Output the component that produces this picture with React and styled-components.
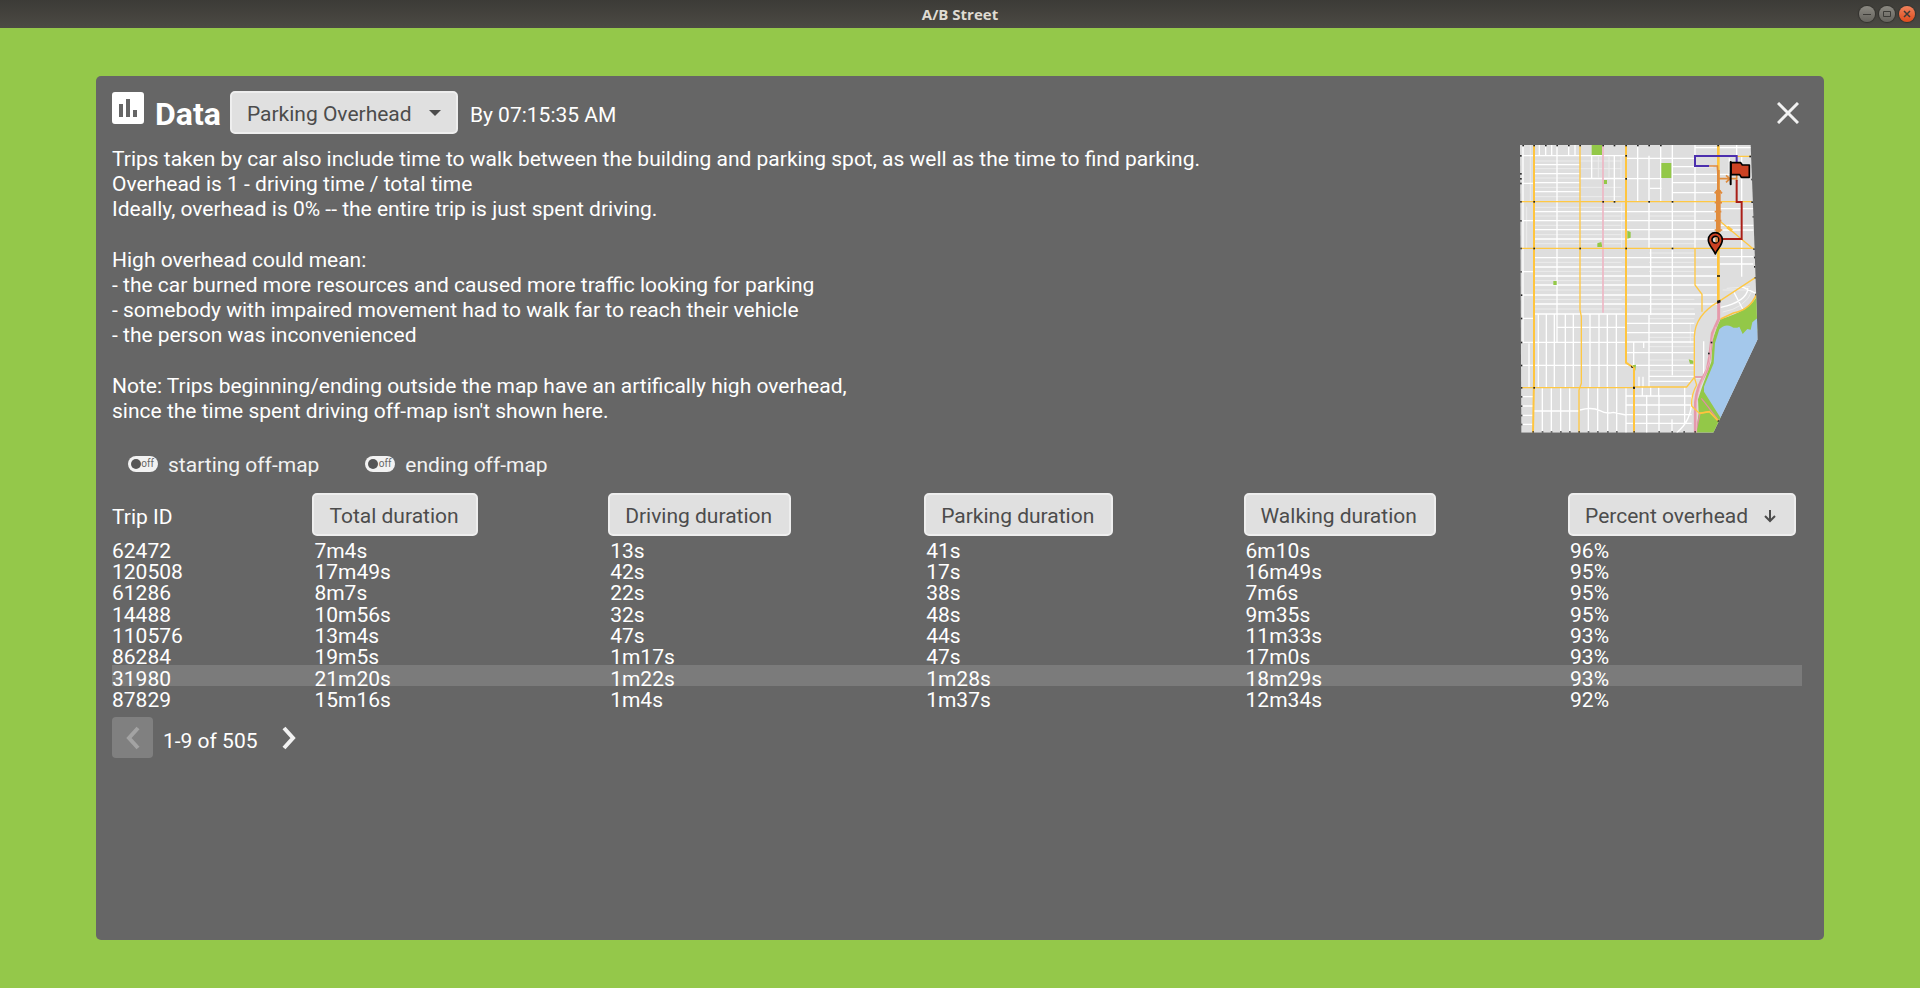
import React, { useState } from "react";
import styled, { createGlobalStyle } from "styled-components";

const GlobalStyle = createGlobalStyle`
  * { box-sizing: border-box; }
  body {
    margin: 0;
    background: #94c84a;
    font-family: Roboto, "Liberation Sans", sans-serif;
    font-size: 21px;
    line-height: 25px;
    color: #fff;
  }
  button, select, input { font: inherit; margin: 0; }
`;

const Page = styled.div`
  display: flex;
  flex-direction: column;
  min-height: 100vh;
`;

const TitleBar = styled.header`
  display: grid;
  grid-template-columns: 1fr auto 1fr;
  align-items: center;
  height: 28px;
  padding: 0 5px;
  background: linear-gradient(#3c3b37, #4c4a44);
`;

const WindowTitle = styled.span`
  grid-column: 2;
  font: bold 15px/20px "Open Sans", "Noto Sans", sans-serif;
  color: #dfdbd2;
`;

const WindowButtons = styled.div`
  display: flex;
  justify-content: flex-end;
  gap: 4px;
`;

const WindowButton = styled.button`
  display: flex;
  width: 16px;
  height: 16px;
  padding: 0;
  border: 0;
  border-radius: 50%;
  color: #3c3b37;
  background: ${(p) => (p.$close ? "linear-gradient(#f0825c, #df4b1c)" : "linear-gradient(#8b8982, #65635d)")};
  box-shadow: 0 0 1px 1px #33322e;
`;

const Main = styled.main`
  display: flex;
  flex: 1;
  padding: 48px 5%;
`;

const Panel = styled.section`
  flex: 1;
  min-width: 0;
  padding: 15px 22px 16px 16px;
  border-radius: 5px;
  background: #666;
`;

const Header = styled.div`
  display: flex;
  align-items: center;
  height: 43px;
`;

const HeaderIcon = styled.svg`
  align-self: flex-start;
  margin: 1px 11px 0 0;
`;

const Title = styled.h1`
  margin: 0;
  padding: 2px 9px 0 0;
  font-size: 32px;
  line-height: 36px;
  font-weight: bold;
`;

const SelectBox = styled.div`
  display: grid;
  align-items: center;
  width: 228px;
  margin-right: 12px;

  & > * { grid-area: 1 / 1; }
  & > svg { justify-self: end; margin-right: 17px; pointer-events: none; }
`;

const Select = styled.select`
  appearance: none;
  width: 100%;
  height: 43px;
  padding: 3px 16px 0 15px;
  border: 2px solid #eee;
  border-radius: 5px;
  background: #e0e0e0;
  color: #4c4c4c;
`;

const Clock = styled.span`
  padding-top: 5px;
`;

const CloseButton = styled.button`
  display: flex;
  margin-left: auto;
  padding: 0 3px 0 0;
  border: 0;
  background: none;
`;

const Intro = styled.div`
  display: flex;
  justify-content: space-between;
  margin-top: 10px;
  padding-right: 42px;
`;

const IntroText = styled.div`
  display: flex;
  flex-direction: column;
  gap: 26px;
  padding-top: 3px;
`;

const Paragraph = styled.p`
  margin: 0;
  white-space: pre-line;
`;

const Toggles = styled.div`
  display: flex;
  gap: 46px;
  margin-top: 18px;
  padding-left: 16px;
`;

const ToggleLabel = styled.label`
  display: flex;
  align-items: flex-start;
  gap: 10px;
  padding-top: 1px;
  color: #f2f2f2;
`;

const ToggleInput = styled.input`
  position: absolute;
  opacity: 0;
`;

const Switch = styled.span`
  display: flex;
  flex-direction: ${(p) => (p.$on ? "row-reverse" : "row")};
  align-items: center;
  justify-content: space-between;
  width: 30px;
  height: 16px;
  margin-top: 3px;
  padding: 0 4px 0 3px;
  border-radius: 8px;
  background: #f2f2f2;
  color: #666;
  font-size: 10px;
  line-height: 16px;

  &::before {
    content: "";
    width: 10px;
    height: 10px;
    border-radius: 50%;
    background: #555;
  }
`;

const Table = styled.table`
  width: 100%;
  margin-top: 15px;
  table-layout: fixed;
  border-collapse: collapse;
  text-align: left;
`;

const Col = styled.col`
  width: ${(p) => p.$width};
`;

const HeadCell = styled.th`
  height: 44px;
  padding: ${(p) => (p.$plain ? "4px 0 0" : "0 0 1px 1px")};
  font-weight: normal;
`;

const SortButton = styled.button`
  display: inline-flex;
  align-items: center;
  gap: 15px;
  height: 43px;
  padding: 3px 17px 0 15px;
  border: 2px solid #eee;
  border-radius: 5px;
  background: #e0e0e0;
  color: #4c4c4c;
  white-space: nowrap;
  vertical-align: top;
`;

const Row = styled.tr`
  height: 21px;
  line-height: 15px;
  background: ${(p) => (p.$hovered ? "#7b7b7b" : "none")};
  &:nth-child(3n) { height: 22px; }
`;

const Cell = styled.td`
  padding: 6px 0 0 3px;
  vertical-align: top;
  &:first-child { padding-left: 0; }
`;

const Value = styled.span`
  display: block;
  height: 15px;
  line-height: 17px;
`;

const Pager = styled.nav`
  display: flex;
  align-items: center;
  margin-top: 10px;
`;

const PageButton = styled.button`
  display: flex;
  align-items: center;
  justify-content: center;
  width: 41px;
  height: 41px;
  padding: 0;
  border: 0;
  border-radius: 4px;
  background: ${(p) => (p.disabled ? "#808080" : "none")};
  color: ${(p) => (p.disabled ? "#a3a3a3" : "#f2f2f2")};
`;

const PageRange = styled.span`
  padding: 7px 11px 0 10px;
`;

const SORTABLE_COLUMNS = ["Total duration", "Driving duration", "Parking duration", "Walking duration"];

const TRIPS = [
  ["62472", "7m4s", "13s", "41s", "6m10s", "96%"],
  ["120508", "17m49s", "42s", "17s", "16m49s", "95%"],
  ["61286", "8m7s", "22s", "38s", "7m6s", "95%"],
  ["14488", "10m56s", "32s", "48s", "9m35s", "95%"],
  ["110576", "13m4s", "47s", "44s", "11m33s", "93%"],
  ["86284", "19m5s", "1m17s", "47s", "17m0s", "93%"],
  ["31980", "21m20s", "1m22s", "1m28s", "18m29s", "93%"],
  ["87829", "15m16s", "1m4s", "1m37s", "12m34s", "92%"],
];
const HOVERED_TRIP = "31980";

const h = (y, x1, x2) => `M${x1} ${y}H${x2}`;
const v = (x, y1, y2) => `M${x} ${y1}V${y2}`;

const MINOR = [
  h(77, 62, 378), h(53, 585, 752), h(85, 378, 585), h(146, 240, 378), h(110, 515, 640), h(133, 515, 700), h(158, 515, 655),
  h(188, 515, 655), h(146, 378, 485), h(175, 450, 485), h(160, 62, 102), h(272, 62, 102), h(425, 62, 102),
  ...[104, 131, 158, 185].map((y) => h(y, 102, 240)),
  ...[245, 272, 299, 327, 383, 411, 438, 465, 495, 522].map((y) => h(y, 102, 655)),
  ...[236, 286, 300, 380, 402].map((y) => h(y, 660, 760)),
  h(552, 102, 585), h(592, 172, 378), h(637, 64, 378), h(706, 64, 378), h(565, 64, 102), h(495, 64, 102),
  ...[580, 608, 636, 668, 706].map((y) => h(y, 378, 583)), h(739, 447, 583), h(754, 447, 575),
  ...[800, 828, 856, 883].map((y) => h(y, 64, 102)),
  h(843, 102, 237), "M240 840Q275 830 300 842Q318 853 340 847L378 855",
  ...[798, 825, 854, 880].map((y) => h(y, 378, 575)),
  v(69, 45, 640), v(87, 640, 773), v(171, 45, 637), v(275, 77, 146), v(343, 77, 215), v(413, 45, 215), v(447, 77, 355),
  v(482, 45, 215), v(517, 45, 736), v(585, 45, 355), v(710, 45, 80), v(725, 79, 440), v(688, 85, 130), v(452, 355, 555), v(447, 555, 771),
  v(447, 215, 355), v(401, 634, 706), v(431, 634, 654), v(611, 634, 740), v(417, 740, 771), v(429, 740, 771),
  ...[115, 139, 163, 196, 220, 270, 297, 322, 349].map((x) => v(x, 552, 773)),
  ...[127, 154, 182, 209, 265, 293, 323, 350, 378].map((x) => v(x, 773, 908)),
  ...[440, 477].map((x) => v(x, 795, 908)), v(516, 868, 908), v(554, 771, 880),
  ...[118, 137, 155, 206, 225].map((x) => v(x, 45, 75)),
  ...[427, 452, 476].map((x) => v(x, 771, 796)),
  "M662 532Q740 515 744 475M702 487L728 537M725 470L768 490M575 800Q578 870 530 908",
];

const FAINT = [
  ...[93, 116, 144, 172, 200, 232, 258, 286, 314, 341, 397, 424, 452, 480, 508, 537].map((y) => h(y, 102, 365)),
  ...[258, 341, 369, 397, 424, 508, 537, 566, 622, 650, 690, 722].map((y) => h(y, 447, 583)),
  v(80, 230, 355), v(365, 220, 355), v(295, 80, 143), v(327, 80, 143), v(363, 80, 143), v(571, 580, 640), v(91, 45, 215),
  "M668 546Q735 535 757 482M680 475L750 470M668 480H740M588 745H610",
];

const MAJOR = [
  "M240 45V540L244 560V760L237 780V908", "M62 215H756M62 355H762M64 773H402M402 771H560L583 742M710 79H752",
  "M585 355V465L606 493V545", "M766 443L656 515Q585 555 583 620V742L590 765Q573 795 575 828L598 850L628 845",
  "M662 275L760 357",
];

const JUNCTIONS = [
  [102, 215], [102, 355], [240, 355], [309, 215], [343, 215], [378, 77], [378, 146], [378, 355], [447, 215], [517, 215], [517, 355],
  [62, 77], [62, 131], [62, 146], [62, 160], [62, 215], [62, 272], [62, 355], [62, 425], [64, 495], [64, 565], [64, 637], [64, 706], [64, 773],
  [64, 800], [64, 828], [64, 856], [64, 883], [99, 906], [127, 906], [154, 906], [182, 906], [209, 906], [237, 906], [265, 906], [293, 906],
  [323, 906], [350, 906], [402, 906], [477, 906], [516, 906], [552, 906], [585, 906], [69, 46], [102, 46], [137, 46], [171, 46], [206, 46],
  [240, 46], [309, 46], [343, 46], [378, 46], [413, 46], [447, 46], [482, 46], [654, 46], [102, 773], [402, 773], [750, 79],
  [756, 148], [756, 216], [760, 260], [762, 357], [764, 382], [764, 410], [766, 443], [768, 493], [634, 637], [626, 670], [655, 873],
];

function TripMap() {
  return (
    <svg width="240" height="290" viewBox="60 42 720 870" role="img" aria-label="Map of the selected trip" fill="none">
      <clipPath id="city">
        <path d="M60 45H752L760 250L768 480L773 628L640 908H64Z" />
      </clipPath>
      <g clipPath="url(#city)">
        <path d="M60 42H780V912H60Z" fill="#dedede" />
        <path d={FAINT.join("")} stroke="#ececec" strokeWidth="3" />
        <path d={MINOR.join("")} stroke="#fff" strokeWidth="4" />
        <g fill="#93c848">
          <path d="M275 45H306V75H275ZM484 99H514V144H484ZM311 150H321V162H311ZM292 340L304 336L307 351H292ZM382 302L392 306V323L382 326ZM160 453H170V465H160ZM566 688L580 692V701L570 701ZM397 706L408 704L406 722Z" />
          <path d="M775 490Q755 540 662 567Q650 590 638 630L634 695L606 772L594 808L596 850L588 908H645L665 868L650 780L775 600Z" />
        </g>
        <path d="M658 598Q675 580 695 590Q705 597 718 590L728 612L742 597L752 599L757 577L775 562V640L662 864L612 785V770L641 700L645 640Z" fill="#a4c8eb" />
        <path d="M309 45V548" stroke="#edb6c4" strokeWidth="5" />
        <path d="M583 741H606M604 805Q625 830 655 872M600 850L590 895" stroke="#df8fa2" strokeWidth="4" />
        <path d="M656 515V567L637 610L629 680L622 718L603 755Q585 790 586 840V908" stroke="#e59aab" strokeWidth="9" />
        <path d="M648 590L633 640L628 695L602 765L590 815V905" stroke="#f3c3cd" strokeWidth="2" />
        <path d={MAJOR.join("")} stroke="#ffc843" strokeWidth="4" />
        <path d="M770 492Q750 540 700 549L662 567M598 850L628 845L654 872" stroke="#fdc33e" strokeWidth="5" />
        <path d="M102 45V750L99 908M378 45V698L402 714V908" stroke="#ffc53e" strokeWidth="6" />
        <path d="M655 45V515" stroke="#ffc53e" strokeWidth="8" />
        <path d="M651 512L661 509L662 517L652 521ZM651 436H660V440H651ZM392 706L400 713L395 714ZM399 770H405V776H399Z" fill="#111" />
        {JUNCTIONS.map(([x, y]) => (
          <rect key={`${x}-${y}`} x={x - 2} y={y - 2} width="5" height="5" fill="#222" />
        ))}
      </g>
      <path d="M628 108H585V78H710V100" stroke="#4c2fae" strokeWidth="6" />
      <path d="M628 108H652L655 146H712M710 135V152M678 136L690 146L678 157" stroke="#e08b3c" strokeWidth="5" />
      <path d="M651 120H659V180H662V306H648V180H651Z" fill="#e08b3c" />
      <path d="M644 190L655 178L666 190M644 218H666M644 245H664M644 272H664M644 300H667" stroke="#e08b3c" strokeWidth="5" />
      <path d="M682 291L696 302" stroke="#ffc53e" strokeWidth="9" />
      <path d="M710 150V216H725V327H666" stroke="#a91f18" strokeWidth="6" />
      <path d="M693 98H722L727 105H748V142H724L719 134H693Z" fill="#cc4223" stroke="#000" strokeWidth="5" strokeLinejoin="round" />
      <path d="M692 96V163" stroke="#000" strokeWidth="6" strokeLinecap="round" />
      <path d="M646 372C640 356 625 346 625 329A21 21 0 0 1 667 329C667 346 652 356 646 372Z" fill="#cc4223" stroke="#000" strokeWidth="5" strokeLinejoin="round" />
      <circle cx="646" cy="329" r="10" fill="#dedede" stroke="#000" strokeWidth="5" />
      <path d="M646 322H653V337H646Z" fill="#e08b3c" />
    </svg>
  );
}

function Toggle({ children }) {
  const [on, setOn] = useState(false);
  return (
    <ToggleLabel>
      <ToggleInput type="checkbox" role="switch" checked={on} onChange={() => setOn(!on)} />
      <Switch $on={on}>{on ? "on" : "off"}</Switch>
      {children}
    </ToggleLabel>
  );
}

export default function App() {
  return (
    <Page>
      <GlobalStyle />
      <TitleBar>
        <WindowTitle>A/B Street</WindowTitle>
        <WindowButtons>
          <WindowButton aria-label="Minimize">
            <svg width="16" height="16" stroke="currentColor"><path d="M4 8.500H12" /></svg>
          </WindowButton>
          <WindowButton aria-label="Maximize">
            <svg width="16" height="16" stroke="currentColor" fill="none"><path d="M4.500 5.500H11.500V10.500H4.500Z" /></svg>
          </WindowButton>
          <WindowButton $close aria-label="Close window">
            <svg width="16" height="16" stroke="currentColor" strokeWidth="1.500"><path d="M5 5L11 11M11 5L5 11" /></svg>
          </WindowButton>
        </WindowButtons>
      </TitleBar>
      <Main>
        <Panel>
          <Header>
            <HeaderIcon width="32" height="32" viewBox="0 0 32 32" aria-hidden="true">
              <path fill="#fff" fillRule="evenodd" d="M3 0H29Q32 0 32 3V29Q32 32 29 32H3Q0 32 0 29V3Q0 0 3 0ZM7 12V25H11V12ZM14 7V25H18V7ZM21 18V25H25V18Z" />
            </HeaderIcon>
            <Title>Data</Title>
            <SelectBox>
              <Select aria-label="Data view" defaultValue="parking">
                <option value="parking">Parking Overhead</option>
              </Select>
              <svg width="12" height="6" aria-hidden="true"><path d="M0 0H12L6 6Z" fill="#4c4c4c" /></svg>
            </SelectBox>
            <Clock>By 07:15:35 AM</Clock>
            <CloseButton aria-label="Close">
              <svg width="22" height="22" stroke="#f2f2f2" strokeWidth="3"><path d="M1 1L21 21M21 1L1 21" /></svg>
            </CloseButton>
          </Header>
          <Intro>
            <IntroText>
              <Paragraph>
                {"Trips taken by car also include time to walk between the building and parking spot, as well as the time to find parking.\nOverhead is 1 - driving time / total time\nIdeally, overhead is 0% -- the entire trip is just spent driving."}
              </Paragraph>
              <Paragraph>
                {"High overhead could mean:\n- the car burned more resources and caused more traffic looking for parking\n- somebody with impaired movement had to walk far to reach their vehicle\n- the person was inconvenienced"}
              </Paragraph>
              <Paragraph>
                {"Note: Trips beginning/ending outside the map have an artifically high overhead,\nsince the time spent driving off-map isn't shown here."}
              </Paragraph>
            </IntroText>
            <TripMap />
          </Intro>
          <Toggles>
            <Toggle>starting off-map</Toggle>
            <Toggle>ending off-map</Toggle>
          </Toggles>
          <Table>
            <colgroup>
              {["11.8%", "17.5%", "18.7%", "18.9%", "19.2%", "13.9%"].map((width, i) => (
                <Col key={i} $width={width} />
              ))}
            </colgroup>
            <thead>
              <tr>
                <HeadCell $plain>Trip ID</HeadCell>
                {SORTABLE_COLUMNS.map((name) => (
                  <HeadCell key={name}>
                    <SortButton>{name}</SortButton>
                  </HeadCell>
                ))}
                <HeadCell aria-sort="descending">
                  <SortButton>
                    Percent overhead
                    <svg width="14" height="13" fill="none" stroke="currentColor" strokeWidth="2" aria-hidden="true">
                      <path d="M7 0V11M2 6L7 11L12 6" />
                    </svg>
                  </SortButton>
                </HeadCell>
              </tr>
            </thead>
            <tbody>
              {TRIPS.map((trip) => (
                <Row key={trip[0]} $hovered={trip[0] === HOVERED_TRIP}>
                  {trip.map((value, i) => (
                    <Cell key={i}>
                      <Value>{value}</Value>
                    </Cell>
                  ))}
                </Row>
              ))}
            </tbody>
          </Table>
          <Pager aria-label="Trips pages">
            <PageButton disabled aria-label="Previous page">
              <svg width="14" height="24" fill="none" stroke="currentColor" strokeWidth="4"><path d="M12 2L3 12L12 22" /></svg>
            </PageButton>
            <PageRange>1-9 of 505</PageRange>
            <PageButton aria-label="Next page">
              <svg width="14" height="24" fill="none" stroke="currentColor" strokeWidth="4"><path d="M2 2L11 12L2 22" /></svg>
            </PageButton>
          </Pager>
        </Panel>
      </Main>
    </Page>
  );
}
